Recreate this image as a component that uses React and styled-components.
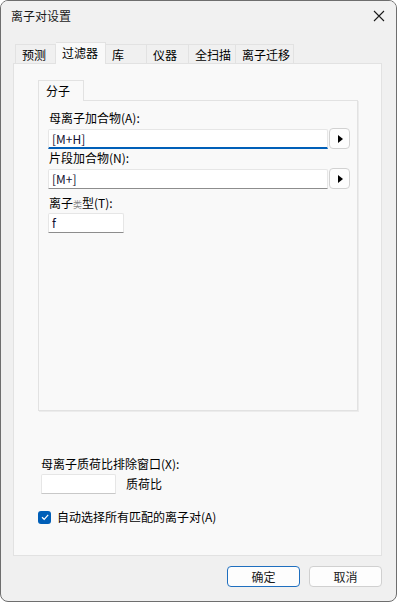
import React from 'react'
import styled, { createGlobalStyle, css } from 'styled-components'

const FONT = `"Segoe UI", "Noto Sans CJK SC", "Noto Sans", sans-serif`

const GlobalStyle = createGlobalStyle`
    html, body { margin: 0; padding: 0; background: #ffffff; }
    * { box-sizing: border-box; }
`

const TABS = [
    { label: '预测', width: 41 },
    { label: '过滤器', width: 50, active: true },
    { label: '库', width: 41 },
    { label: '仪器', width: 42 },
    { label: '全扫描', width: 47 },
    { label: '离子迁移', width: 58 }
]

const CloseIcon = () => (
    <svg width="12" height="12" viewBox="0 0 12 12">
        <path d="M1 1 L11 11 M11 1 L1 11" stroke="#1b1b1b" strokeWidth="1.1" fill="none" />
    </svg>
)

const ArrowIcon = () => (
    <svg width="8" height="10" viewBox="0 0 8 10">
        <path d="M2 1 L7 5 L2 9 Z" fill="#000" />
    </svg>
)

const CheckIcon = () => (
    <svg width="10" height="10" viewBox="0 0 10 10">
        <path d="M2 5.2 L4.2 7.3 L8.2 2.8" stroke="#fff" strokeWidth="1.2" fill="none" />
    </svg>
)

const AdductRow = ({ label, value, focused }) => (
    <>
        <FieldLabel>{label}</FieldLabel>
        <Row>
            <TextInput width="280px" focused={focused}>{value}</TextInput>
            <ArrowButton><ArrowIcon /></ArrowButton>
        </Row>
    </>
)

export default function App () {
    return (
        <>
            <GlobalStyle />
            <Window>
                <TitleBar>
                    <Title>离子对设置</Title>
                    <CloseBox><CloseIcon /></CloseBox>
                </TitleBar>
                <Body>
                    <TabStrip>
                        {TABS.map(t => (
                            <Tab key={t.label} width={t.width} active={t.active}>{t.label}</Tab>
                        ))}
                    </TabStrip>
                    <Page>
                        <GroupTab>分子</GroupTab>
                        <Group>
                            <AdductRow label="母离子加合物(A):" value="[M+H]" focused />
                            <AdductRow label="片段加合物(N):" value="[M+]" />
                            <FieldLabel top="5px">离子<Faint>类</Faint>型(T):</FieldLabel>
                            <TextInput width="76px">f</TextInput>
                        </Group>
                        <WindowLabel>母离子质荷比排除窗口(X):</WindowLabel>
                        <Row gap="10px" indent="3px">
                            <TextInput width="75px" light />
                            <Unit>质荷比</Unit>
                        </Row>
                        <CheckRow>
                            <CheckBox><CheckIcon /></CheckBox>
                            <span>自动选择所有匹配的离子对(A)</span>
                        </CheckRow>
                    </Page>
                    <Footer>
                        <Button primary>确定</Button>
                        <Button>取消</Button>
                    </Footer>
                </Body>
            </Window>
        </>
    )
}

const Window = styled.div`
    width: 397px;
    height: 602px;
    display: flex;
    flex-direction: column;
    background: #f0f0f0;
    border: 1px solid #6e6e6e;
    border-radius: 8px;
    overflow: hidden;
    font-family: ${ FONT };
    font-size: 12px;
    color: #000;
`
const TitleBar = styled.div`
    height: 29px;
    display: flex;
    align-items: center;
    justify-content: space-between;
    padding: 0 10px 0 10px;
    background: #f1f1f1;
`
const Title = styled.span`
    font-size: 12px;
    color: #1a1a1a;
`
const CloseBox = styled.div`
    width: 14px;
    height: 14px;
    display: flex;
    align-items: center;
    justify-content: center;
`
const Body = styled.div`
    flex: 1;
    display: flex;
    flex-direction: column;
    padding: 12px 14px 0 12px;
`
const TabStrip = styled.div`
    height: 21px;
    display: flex;
    align-items: flex-end;
    padding-left: 2px;
    position: relative;
    z-index: 1;
`
const Tab = styled.div`
    width: ${ ({ width }) => width }px;
    height: 19px;
    padding: 1px 0 0 6px;
    line-height: 17px;
    border: 1px solid #e2e2e2;
    border-bottom: none;
    border-left: none;
    background: #f0f0f0;
    white-space: nowrap;
    &:first-child { border-left: 1px solid #e2e2e2; }
    ${ ({ active }) => active && css`
        height: 22px;
        margin-bottom: -1px;
        background: #f9f9f9;
        padding-top: 1px;
        position: relative;
        z-index: 2;
    ` }
`
const Page = styled.div`
    height: 493px;
    display: flex;
    flex-direction: column;
    align-items: flex-start;
    background: #f9f9f9;
    border: 1px solid #e2e2e2;
    padding: 16px 24px 0 24px;
`
const GroupTab = styled.div`
    width: 46px;
    height: 21px;
    padding: 1px 0 0 7px;
    line-height: 17px;
    border: 1px solid #e2e2e2;
    border-bottom: none;
    margin-bottom: -1px;
    background: #f9f9f9;
    position: relative;
    z-index: 1;
`
const Group = styled.div`
    width: 320px;
    height: 311px;
    display: flex;
    flex-direction: column;
    align-items: flex-start;
    border: 1px solid #e2e2e2;
    box-shadow: 1px 1px 0 #ececec;
    padding: 8px 0 0 9px;
`
const FieldLabel = styled.div`
    height: 19px;
    line-height: 18px;
    padding-left: 1px;
    margin-top: ${ ({ top }) => top || '0' };
`
const Faint = styled.span`
    color: #888;
    font-size: 9px;
`
const Row = styled.div`
    display: flex;
    align-items: center;
    gap: ${ ({ gap }) => gap || '1px' };
    margin-left: ${ ({ indent }) => indent || '0' };
`
const TextInput = styled.div`
    width: ${ ({ width }) => width };
    height: 20px;
    line-height: 18px;
    padding-left: 3px;
    background: #fff;
    border: 1px solid #e6e6e6;
    border-bottom: 1px solid ${ ({ light }) => light ? '#c8c8c8' : '#8d8d8d' };
    border-radius: 2px 2px 0 0;
    color: #101030;
    ${ ({ focused }) => focused && css`
        border-bottom: 2px solid #005fb8;
        line-height: 17px;
    ` }
`
const ArrowButton = styled.div`
    width: 21px;
    height: 21px;
    display: flex;
    align-items: center;
    justify-content: center;
    background: #fdfdfd;
    border: 1px solid #d2d2d2;
    border-radius: 4px;
`
const WindowLabel = styled.div`
    margin: 44px 0 1px 3px;
    height: 18px;
    line-height: 18px;
`
const Unit = styled.span`
    line-height: 18px;
`
const CheckRow = styled.div`
    display: flex;
    align-items: center;
    gap: 6px;
    margin-top: 15px;
    line-height: 16px;
`
const CheckBox = styled.div`
    width: 13px;
    height: 13px;
    border-radius: 3px;
    background: #005fb8;
    display: flex;
    align-items: center;
    justify-content: center;
`
const Footer = styled.div`
    display: flex;
    justify-content: flex-end;
    gap: 9px;
    margin-top: 10px;
`
const Button = styled.div`
    width: 73px;
    height: 21px;
    display: flex;
    align-items: center;
    justify-content: center;
    background: #fdfdfd;
    border: 1px solid ${ ({ primary }) => primary ? '#1f6fbf' : '#d0d0d0' };
    border-radius: 4px;
    color: #1a1a1a;
`
